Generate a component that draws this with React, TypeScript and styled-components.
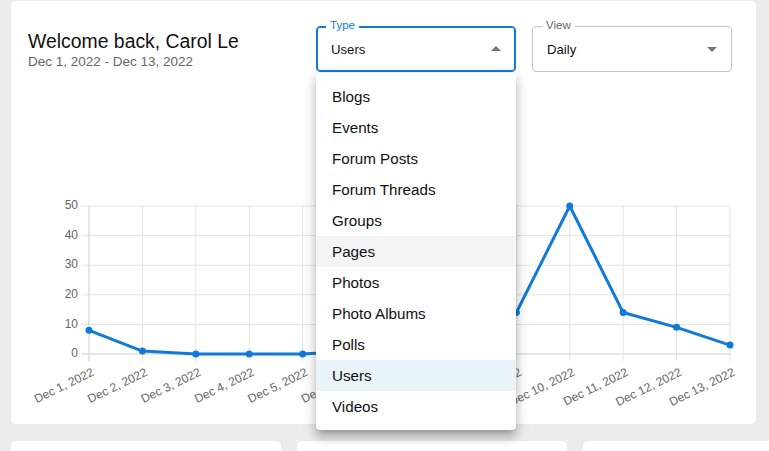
import React from "react";
import styled, { createGlobalStyle } from "styled-components";

const Global = createGlobalStyle`
  html, body { margin: 0; padding: 0; }
  body {
    background: #ececec;
    font-family: "Liberation Sans", Arial, sans-serif;
    overflow: hidden;
    width: 769px;
    height: 451px;
  }
`;

const Page = styled.div`
  box-sizing: border-box;
  width: 769px;
  height: 451px;
  overflow: hidden;
  padding: 1px 0 0 11px;
  display: flex;
  flex-direction: column;
  gap: 17px;
`;

const MainCard = styled.section`
  flex: none;
  width: 745px;
  height: 423px;
  background: #fff;
  border-radius: 5px;
  display: flex;
  flex-direction: column;
`;

const Header = styled.header`
  display: flex;
  justify-content: space-between;
  align-items: flex-start;
  padding: 25px 24px 0 17px;
`;

const TitleBlock = styled.div`
  margin-top: 3px;
  display: flex;
  flex-direction: column;
`;

const Title = styled.h1`
  margin: 0;
  font-size: 19.4px;
  line-height: 24px;
  font-weight: 400;
  color: #111;
`;

const Subtitle = styled.div`
  margin-top: 1px;
  font-size: 13.5px;
  line-height: 16px;
  color: #666;
`;

const Controls = styled.div`
  display: flex;
  gap: 16px;
`;

const SelectWrap = styled.div`
  position: relative;
  width: 200px;
`;

const SelectBox = styled.div<{ $focused?: boolean }>`
  box-sizing: border-box;
  height: 46px;
  border-radius: 4px;
  border: 1px solid ${(p) => (p.$focused ? "#0f7ad8" : "#c4c4c4")};
  box-shadow: ${(p) => (p.$focused ? "inset 0 0 0 1px #0f7ad8" : "none")};
  display: flex;
  align-items: center;
  justify-content: space-between;
  padding: 0 7px 0 14px;
  font-size: 13.2px;
  color: #111;
`;

const FloatLabel = styled.span<{ $focused?: boolean }>`
  position: absolute;
  left: 10px;
  top: -7px;
  padding: 0 4px;
  background: #fff;
  font-size: 11.5px;
  line-height: 13px;
  color: ${(p) => (p.$focused ? "#0f7ad8" : "#666")};
`;

const Arrow = styled.svg<{ $up?: boolean }>`
  width: 24px;
  height: 24px;
  fill: #757575;
  transform: ${(p) => (p.$up ? "rotate(180deg)" : "none")};
`;

const Menu = styled.ul`
  position: absolute;
  top: 47px;
  left: 0;
  width: 200px;
  margin: 0;
  padding: 8px 0;
  list-style: none;
  background: #fff;
  border-radius: 4px;
  box-shadow: 0 5px 5px -3px rgba(0, 0, 0, 0.2), 0 8px 10px 1px rgba(0, 0, 0, 0.14),
    0 3px 14px 2px rgba(0, 0, 0, 0.12);
  z-index: 10;
`;

const MenuItem = styled.li<{ $state?: "hover" | "selected" }>`
  height: 31px;
  display: flex;
  align-items: center;
  padding: 0 16px;
  font-size: 15.2px;
  color: #111;
  background: ${(p) =>
    p.$state === "hover" ? "#f4f4f4" : p.$state === "selected" ? "#e9f3fa" : "transparent"};
`;

const ChartSvg = styled.svg`
  display: block;
  margin-top: 118px;
  width: 745px;
  height: 233px;
  font-family: "Liberation Sans", Arial, sans-serif;
`;

const Row = styled.div`
  display: flex;
  gap: 16px;
`;

const SmallCard = styled.div`
  flex: none;
  width: 270px;
  height: 200px;
  background: #fff;
  border-radius: 5px;
`;

const labels = [
  "Dec 1, 2022", "Dec 2, 2022", "Dec 3, 2022", "Dec 4, 2022", "Dec 5, 2022",
  "Dec 6, 2022", "Dec 7, 2022", "Dec 8, 2022", "Dec 9, 2022", "Dec 10, 2022",
  "Dec 11, 2022", "Dec 12, 2022", "Dec 13, 2022",
];
const values = [8, 1, 0, 0, 0, 1, 2, 3, 14, 50, 14, 9, 3];

const LEFT = 78;
const RIGHT = 719;
const TOP = 16;
const BOTTOM = 164;
const BLUE = "#0f7ad8";

function Chart() {
  const step = (RIGHT - LEFT) / (labels.length - 1);
  const xs = labels.map((_, i) => LEFT + i * step);
  const y = (v: number) => BOTTOM - (v / 50) * (BOTTOM - TOP);
  const pts = values.map((v, i) => `${xs[i]},${y(v)}`).join(" ");
  return (
    <ChartSvg viewBox="0 0 745 233">
      {[0, 10, 20, 30, 40, 50].map((t) => (
        <g key={t}>
          <line x1={LEFT - 8} x2={RIGHT} y1={y(t)} y2={y(t)} stroke={t === 0 ? "#cfcfcf" : "#e4e4e4"} strokeWidth={1} />
          <text x={LEFT - 11} y={y(t)} textAnchor="end" dominantBaseline="middle" fontSize={12} fill="#666">
            {t}
          </text>
        </g>
      ))}
      {xs.map((x, i) => (
        <g key={i}>
          <line x1={x} x2={x} y1={TOP} y2={BOTTOM + 7} stroke={i === 0 ? "#cfcfcf" : "#e4e4e4"} strokeWidth={1} />
          <text
            transform={`translate(${x + 2},${BOTTOM + 13}) rotate(-26)`}
            textAnchor="end"
            dominantBaseline="hanging"
            fontSize={12}
            fill="#666"
          >
            {labels[i]}
          </text>
        </g>
      ))}
      <polyline points={pts} fill="none" stroke={BLUE} strokeWidth={3} strokeLinejoin="round" />
      {values.map((v, i) => (
        <circle key={i} cx={xs[i]} cy={y(v)} r={3.5} fill={BLUE} />
      ))}
    </ChartSvg>
  );
}

const types = [
  "Blogs", "Events", "Forum Posts", "Forum Threads", "Groups", "Pages",
  "Photos", "Photo Albums", "Polls", "Users", "Videos",
];

function DropIcon({ up }: { up?: boolean }) {
  return (
    <Arrow $up={up} viewBox="0 0 24 24">
      <path d="M7 10l5 5 5-5z" />
    </Arrow>
  );
}

export default function App() {
  return (
    <>
      <Global />
      <Page>
        <MainCard>
          <Header>
            <TitleBlock>
              <Title>Welcome back, Carol Le</Title>
              <Subtitle>Dec 1, 2022 - Dec 13, 2022</Subtitle>
            </TitleBlock>
            <Controls>
              <SelectWrap>
                <SelectBox $focused>
                  <span>Users</span>
                  <DropIcon up />
                </SelectBox>
                <FloatLabel $focused>Type</FloatLabel>
                <Menu>
                  {types.map((t) => (
                    <MenuItem
                      key={t}
                      $state={t === "Pages" ? "hover" : t === "Users" ? "selected" : undefined}
                    >
                      {t}
                    </MenuItem>
                  ))}
                </Menu>
              </SelectWrap>
              <SelectWrap>
                <SelectBox>
                  <span>Daily</span>
                  <DropIcon />
                </SelectBox>
                <FloatLabel>View</FloatLabel>
              </SelectWrap>
            </Controls>
          </Header>
          <Chart />
        </MainCard>
        <Row>
          <SmallCard />
          <SmallCard />
          <SmallCard />
        </Row>
      </Page>
    </>
  );
}
